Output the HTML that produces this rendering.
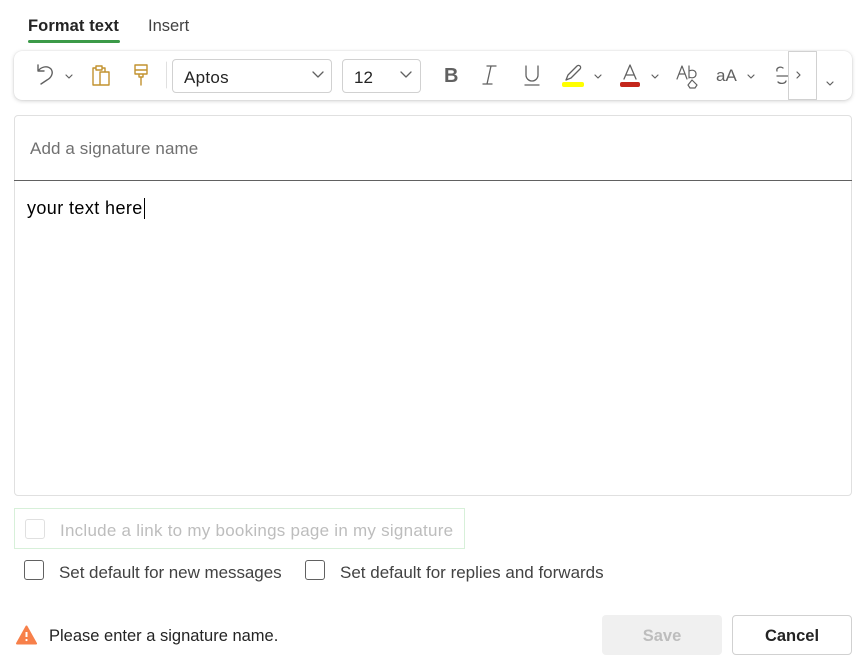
<!DOCTYPE html>
<html><head><meta charset="utf-8"><style>
*{box-sizing:border-box;margin:0;padding:0}
body{width:865px;height:672px;background:#fff;font-family:"Liberation Sans",sans-serif;color:#242424;position:relative;overflow:hidden}
.a{position:absolute}
.tab{font-size:16.5px;top:17px}
.tb{left:14px;top:51px;width:838px;height:49px;border-radius:8px;background:#fff;box-shadow:0 1px 4px rgba(0,0,0,.18),0 0 1px rgba(0,0,0,.15)}
.dd{border:1px solid #d1d1d1;border-radius:4px;height:34px;top:59px;font-size:17px;padding:8px 0 0 11px}
.cb{border:1px solid #616161;border-radius:3px;width:20px;height:20px}
.t{font-size:17px;letter-spacing:.1px}
</style></head><body>
<div class="a tab" style="left:28px;font-weight:bold;color:#242424;letter-spacing:.1px">Format text</div>
<div class="a" style="left:28px;top:40px;width:92px;height:3px;background:#3b9a48;border-radius:2px"></div>
<div class="a tab" style="left:148px;color:#424242">Insert</div>

<div class="a tb"></div>
<svg class="a" style="left:0;top:51px" width="865" height="49" fill="none" stroke-linecap="round" stroke-linejoin="round">
 <path d="M38 14v6h6M38 20c3-4 9-6 13-2 3 4 0 9-4 11l-6 4" stroke="#616161" stroke-width="1.4"/>
 <path d="M66 24l3 3 3-3" stroke="#616161" stroke-width="1.2"/>
 <path d="M95 17h-2v17h7M103 17h2v4M96 15h6v4h-6z M100 21h9v13h-9z" stroke="#c2922f" stroke-width="1.4"/>
 <path d="M135 14h12v9h-12zM135 19h12M139 23v3h4v-3M141 26v8" stroke="#c2922f" stroke-width="1.4"/>
 <line x1="166.5" y1="11" x2="166.5" y2="37" stroke="#e0e0e0"/>
 <path d="M313 21l5 5 5-5" stroke="#616161" stroke-width="1.3"/>
 <path d="M401 21l5 5 5-5" stroke="#616161" stroke-width="1.3"/>
 <path d="M487 15h9M483 33h9M491 15l-4 18" stroke="#616161" stroke-width="1.3"/>
 <path d="M526 15v9a6 6 0 0 0 12 0v-9M525 34h14" stroke="#616161" stroke-width="1.3"/>
 <path d="M566 29l2-5 9-9a2 2 0 0 1 3 3l-9 9z" stroke="#616161" stroke-width="1.3"/>
 <rect x="562" y="31" width="22" height="5" rx="2" fill="#ffff00"/>
 <path d="M595 24l3 3 3-3" stroke="#616161" stroke-width="1.2"/>
 <path d="M624 28l6-14 6 14M626 24h8" stroke="#616161" stroke-width="1.3"/>
 <rect x="620" y="31" width="20" height="5" rx="2" fill="#c4261b"/>
 <path d="M652 24l3 3 3-3" stroke="#616161" stroke-width="1.2"/>
 <path d="M677 28l5-13 5 13M679 23h6M689 15v12M689 20c4-2 7 0 7 3s-3 5-7 3M688 34l4-5 5 5-2 3h-5z" stroke="#616161" stroke-width="1.2"/>
 <path d="M748 24l3 3 3-3" stroke="#616161" stroke-width="1.2"/>
 <path d="M783 17c-3-2-7 0-6 3M777 25h11M778 31c2 2 7 2 8-1" stroke="#616161" stroke-width="1.3"/>
 <rect x="788.5" y="0.5" width="28" height="48" fill="#fff" stroke="#d1d1d1"/>
 <path d="M797 21l3 3-3 3" stroke="#616161" stroke-width="1.2"/>
 <path d="M827 31l3 3 3-3" stroke="#616161" stroke-width="1.2"/>
</svg>
<div class="a" style="left:444px;top:65px;font-size:20px;font-weight:bold;color:#616161">B</div>
<div class="a" style="left:716px;top:66px;font-size:17px;color:#616161">aA</div>
<div class="a dd" style="left:172px;width:160px;letter-spacing:.3px">Aptos</div>
<div class="a dd" style="left:342px;width:79px">12</div>

<div class="a" style="left:14px;top:115px;width:838px;height:381px;border:1px solid #e0e0e0;border-radius:4px"></div>
<div class="a" style="left:14px;top:180px;width:838px;height:1px;background:#616161"></div>
<div class="a t" style="left:30px;top:139px;color:#707070">Add a signature name</div>
<div class="a" style="left:27px;top:198px;font-size:18px;letter-spacing:.4px;color:#000">your text here</div>
<div class="a" style="left:144px;top:198px;width:1px;height:21px;background:#000"></div>

<div class="a" style="left:14px;top:508px;width:451px;height:41px;border:1px solid #d7f0d9"></div>
<div class="a cb" style="left:25px;top:519px;border-color:#e0e0e0"></div>
<div class="a t" style="left:60px;top:521px;color:#bdbdbd;letter-spacing:.25px">Include a link to my bookings page in my signature</div>
<div class="a cb" style="left:24px;top:560px"></div>
<div class="a t" style="left:59px;top:563px;color:#424242;letter-spacing:-.05px">Set default for new messages</div>
<div class="a cb" style="left:305px;top:560px"></div>
<div class="a t" style="left:340px;top:563px;color:#424242;letter-spacing:0">Set default for replies and forwards</div>

<svg class="a" style="left:16px;top:625px" width="21" height="20"><path d="M10.5 1.5L20 18.5H1z" fill="#f7804a" stroke="#f7804a" stroke-width="2" stroke-linejoin="round"/><path d="M10.5 7v5" stroke="#fff" stroke-width="2"/><circle cx="10.5" cy="15" r="1.1" fill="#fff"/></svg>
<div class="a" style="left:49px;top:627px;color:#242424;font-size:16.5px">Please enter a signature name.</div>

<div class="a" style="left:602px;top:615px;width:120px;height:40px;background:#f0f0f0;border-radius:4px;color:#bdbdbd;font-size:16.5px;font-weight:bold;text-align:center;line-height:42px">Save</div>
<div class="a" style="left:732px;top:615px;width:120px;height:40px;border:1px solid #d1d1d1;border-radius:4px;color:#242424;font-size:16.5px;font-weight:bold;text-align:center;line-height:40px">Cancel</div>
</body></html>
